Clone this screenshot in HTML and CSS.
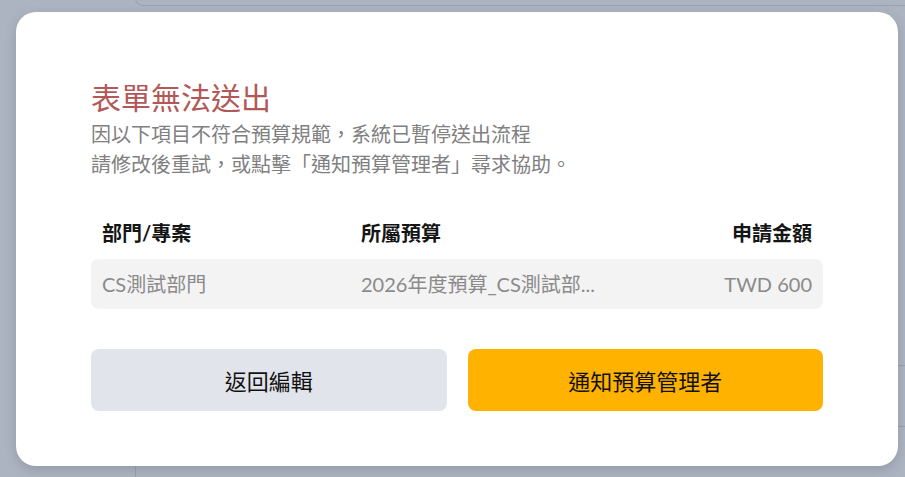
FILE: index.html
```html
<!DOCTYPE html>
<html lang="zh-Hant">
<head>
<meta charset="utf-8">
<title>表單無法送出</title>
<link rel="stylesheet" href="styles.css">
</head>
<body>
<div class="backdrop-page">
  <div class="bg-topcard"></div>
  <div class="bg-table">
    <div class="bg-row"></div>
    <div class="bg-row"></div>
    <div class="bg-row"></div>
  </div>
</div>
<div class="overlay">
  <div class="modal">
    <h1 class="modal-title">表單無法送出</h1>
    <p class="modal-desc">因以下項目不符合預算規範，系統已暫停送出流程<br>請修改後重試，或點擊「通知預算管理者」尋求協助。</p>
    <div class="table">
      <div class="table-head">
        <div class="cell">部門/專案</div>
        <div class="cell">所屬預算</div>
        <div class="cell cell-right">申請金額</div>
      </div>
      <div class="table-row">
        <div class="cell">CS測試部門</div>
        <div class="cell">2026年度預算_CS測試部...</div>
        <div class="cell cell-right">TWD 600</div>
      </div>
    </div>
    <div class="actions">
      <button class="btn btn-secondary">返回編輯</button>
      <button class="btn btn-primary">通知預算管理者</button>
    </div>
  </div>
</div>
</body>
</html>
```

FILE: styles.css
```css
* { box-sizing: border-box; }

html, body {
  margin: 0;
  padding: 0;
  width: 905px;
  height: 477px;
  overflow: hidden;
}

body {
  background: #adb4c1;
  font-family: Lato, "Noto Sans CJK TC", sans-serif;
  position: relative;
}

.backdrop-page {
  position: absolute;
  inset: 0;
  overflow: hidden;
}

.bg-topcard {
  position: absolute;
  left: 135px;
  top: -30px;
  width: 770px;
  height: 36px;
  border: 1px solid #9aa1ae;
  border-right: none;
  border-radius: 8px 0 0 8px;
}

.bg-table {
  position: absolute;
  left: 135px;
  top: 305px;
  width: 770px;
  height: 172px;
  border-left: 1px solid #9aa1ae;
}

.bg-row {
  height: 61px;
  border-bottom: 1px solid #9aa1ae;
}

.overlay {
  position: absolute;
  inset: 0;
  display: flex;
  align-items: flex-start;
  padding: 12px 0 0 16px;
}

.modal {
  width: 882px;
  height: 454px;
  background: #ffffff;
  border-radius: 20px;
  box-shadow: 0 4px 12px rgba(60, 66, 80, 0.22);
  padding: 65px 75px 55px 75px;
  display: flex;
  flex-direction: column;
}

.modal-title {
  margin: 0 0 2px 0;
  font-size: 30px;
  line-height: 40px;
  font-weight: 400;
  color: #b35858;
}

.modal-desc {
  margin: 0;
  font-size: 20px;
  line-height: 30px;
  color: #808080;
}

.table {
  margin-top: 39px;
  display: flex;
  flex-direction: column;
  gap: 11px;
}

.table-head,
.table-row {
  display: grid;
  grid-template-columns: 259px 1fr auto;
  padding: 0 11px;
  font-size: 20px;
  line-height: 30px;
}

.table-head {
  font-weight: 700;
  color: #151515;
}

.table-row {
  height: 50px;
  align-items: center;
  background: #f3f3f3;
  border-radius: 8px;
  color: #8a8a8a;
}

.cell {
  white-space: nowrap;
}

.cell-right {
  text-align: right;
}

.actions {
  margin-top: 40px;
  display: grid;
  grid-template-columns: 1fr 1fr;
  gap: 21px;
}

.btn {
  height: 62px;
  border: none;
  border-radius: 8px;
  font-family: Lato, "Noto Sans CJK TC", sans-serif;
  font-size: 22px;
  color: #111111;
  cursor: pointer;
}

.btn-secondary {
  background: #e1e4eb;
}

.btn-primary {
  background: #ffb300;
}
```
